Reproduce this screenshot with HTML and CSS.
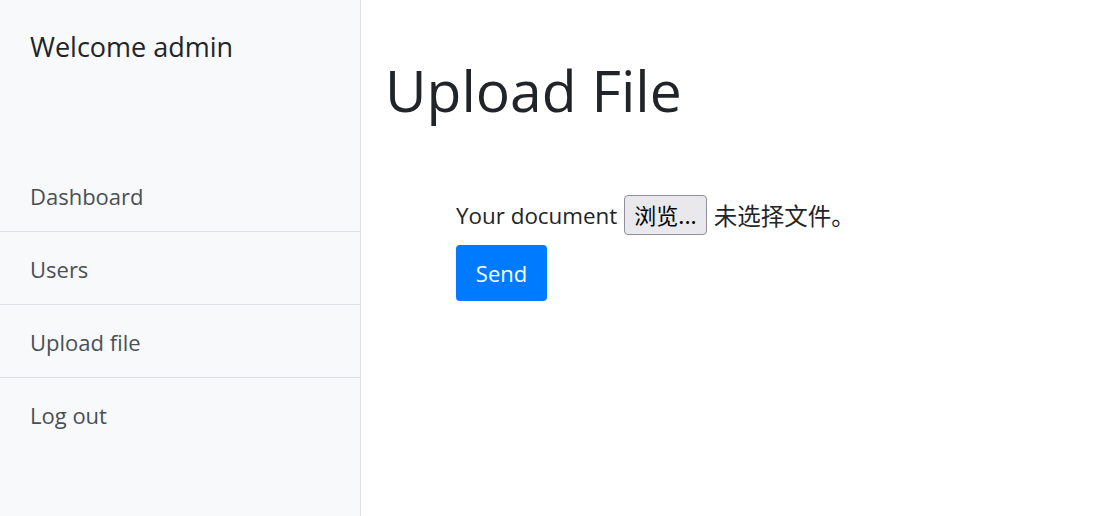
FILE: index.html
```html
<!DOCTYPE html>
<html lang="en">
<head>
<meta charset="utf-8">
<title>Upload File</title>
<link rel="stylesheet" href="styles.css">
</head>
<body>
<div class="wrapper">
  <aside class="sidebar">
    <div class="sidebar-heading">Welcome admin</div>
    <nav class="list-group">
      <a class="list-item" href="#">Dashboard</a>
      <a class="list-item" href="#">Users</a>
      <a class="list-item" href="#">Upload file</a>
      <a class="list-item" href="#">Log out</a>
    </nav>
  </aside>
  <main class="content">
    <h1 class="title">Upload File</h1>
    <form class="upload-form">
      <div class="file-row">
        <span class="label">Your document</span>
        <span class="file-btn">浏览...</span>
        <span class="file-status">未选择文件。</span>
      </div>
      <button type="button" class="btn-send">Send</button>
    </form>
  </main>
</div>
</body>
</html>
```
FILE: styles.css
```css
* { box-sizing: border-box; }
html, body { margin: 0; height: 100%; }
body {
  font-family: "Open Sans", "Noto Sans CJK SC", sans-serif;
  color: #212529;
  background: #fff;
}
.wrapper { display: flex; height: 100%; }
.sidebar {
  width: 361px;
  flex-shrink: 0;
  background: #f8f9fa;
  border-right: 1px solid #dee2e6;
}
.sidebar-heading {
  font-size: 27px;
  line-height: 32px;
  padding: 31px 30px 0;
  height: 159px;
}
.list-group { display: flex; flex-direction: column; }
.list-item {
  display: block;
  font-size: 22px;
  line-height: 26px;
  padding: 24px 30px 22px;
  color: #495057;
  text-decoration: none;
  border-bottom: 1px solid #dee2e6;
}
.list-item:last-child { border-bottom: 0; }
.content { flex: 1; padding: 0 24px; }
.title {
  font-size: 57px;
  font-weight: 400;
  line-height: 1.2;
  margin: 56px 0 0;
}
.upload-form { margin: 71px 0 0 71px; }
.file-row {
  display: flex;
  align-items: center;
  gap: 7px;
  font-size: 22.4px;
  height: 40px;
}
.file-btn {
  font-family: "Noto Sans CJK SC", sans-serif;
  font-size: 22px;
  line-height: 37px;
  height: 40px;
  padding: 0 9px;
  border: 1px solid #8f8f9d;
  border-radius: 4px;
  background: #e9e9ed;
  color: #000;
}
.file-status {
  font-family: "Noto Sans CJK SC", sans-serif;
  font-size: 23.5px;
}
.btn-send {
  display: block;
  margin-top: 10px;
  height: 56px;
  width: 91px;
  padding: 0;
  font-family: inherit;
  font-size: 22px;
  color: #fff;
  background: #007bff;
  border: 0;
  border-radius: 4px;
}
```
